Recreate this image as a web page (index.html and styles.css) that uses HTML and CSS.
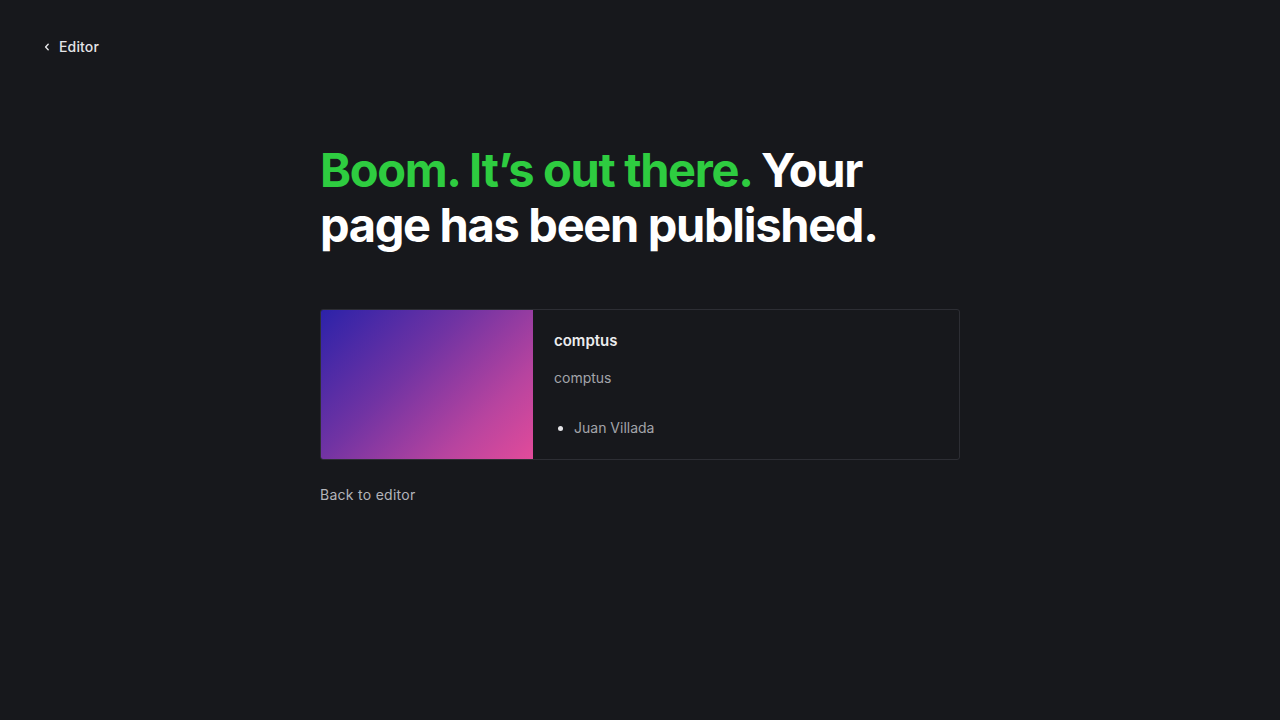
FILE: index.html
```html
<!DOCTYPE html>
<html lang="en">
<head>
<meta charset="utf-8">
<title>Published</title>
<link rel="stylesheet" href="styles.css">
</head>
<body>
<header class="topbar">
  <a class="back-link" href="#">
    <svg class="chev" width="8" height="8" viewBox="0 0 8 8" aria-hidden="true"><path d="M5.2 1.2 L2.6 4 L5.2 6.8" fill="none" stroke="currentColor" stroke-width="1.4" stroke-linecap="round" stroke-linejoin="round"/></svg>
    <span>Editor</span>
  </a>
</header>
<main class="content">
  <h1 class="headline"><span class="accent">Boom. It’s out there.</span> Your page has been published.</h1>
  <div class="card">
    <div class="cover"></div>
    <div class="info">
      <div class="title">comptus</div>
      <div class="desc">comptus</div>
      <ul class="authors"><li>Juan Villada</li></ul>
    </div>
  </div>
  <a class="back-editor" href="#">Back to editor</a>
</main>
</body>
</html>
```
FILE: styles.css
```css
html, body {
  margin: 0;
  padding: 0;
  background: #17181c;
  height: 100%;
}
body {
  font-family: Inter, "Noto Sans", sans-serif;
  color: #e8e8ea;
}
a { text-decoration: none; }
.topbar {
  display: flex;
  padding: 38px 0 0 43px;
}
.back-link {
  display: flex;
  align-items: center;
  gap: 8px;
  color: #e4e4e7;
  font-size: 14px;
  font-weight: 500;
  line-height: 18px;
  letter-spacing: 0.01em;
}
.chev { display: block; }
.content {
  width: 640px;
  margin: 0 auto;
  padding-top: 86px;
}
.headline {
  margin: 0;
  font-size: 47px;
  font-weight: 700;
  line-height: 55px;
  letter-spacing: -0.028em;
  color: #ffffff;
  width: 600px;
}
.accent { color: #2ecc40; }
.card {
  margin-top: 57px;
  display: flex;
  border: 1px solid #2d2e34;
  border-radius: 3px;
  overflow: hidden;
  height: 149px;
}
.cover {
  width: 212px;
  flex: none;
  background: linear-gradient(135deg, #2c22a9 0%, #7033a3 40%, #b8449f 75%, #e24b9a 100%);
}
.info {
  padding: 22px 20px 0 21px;
  flex: 1;
}
.title {
  font-size: 15px;
  font-weight: 600;
  color: #ececee;
  line-height: 18px;
}
.desc {
  margin-top: 19px;
  font-size: 14px;
  color: #a3a4aa;
  line-height: 18px;
}
.authors {
  margin: 32px 0 0;
  padding-left: 20px;
  font-size: 14px;
  color: #a3a4aa;
  line-height: 18px;
}
.authors li::marker { color: #e4e4e7; }
.back-editor {
  display: inline-block;
  margin-top: 26px;
  font-size: 14px;
  color: #b3b4ba;
  line-height: 18px;
  letter-spacing: 0.02em;
}
```
